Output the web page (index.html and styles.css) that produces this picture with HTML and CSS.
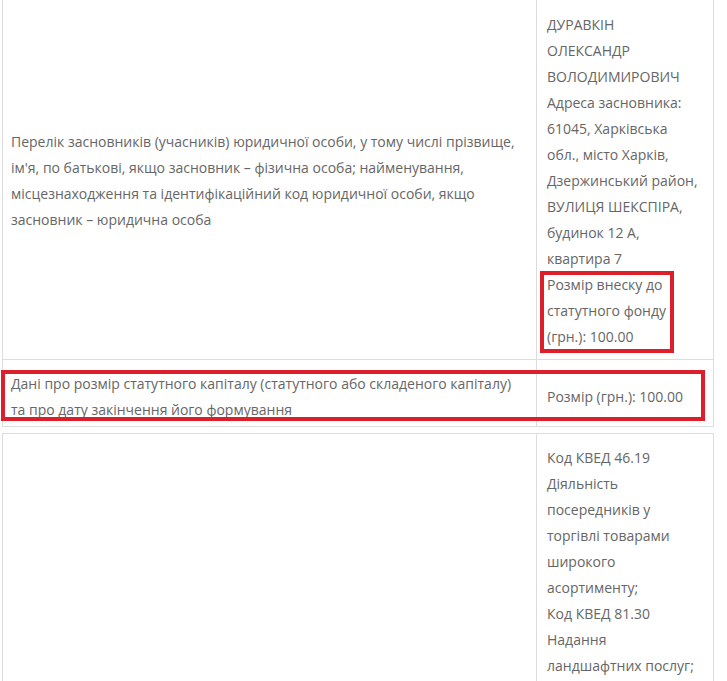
FILE: index.html
```html
<!DOCTYPE html>
<html lang="uk">
<head>
<meta charset="utf-8">
<title>Відомості про юридичну особу</title>
<link rel="stylesheet" href="styles.css">
</head>
<body>
<div class="register">
  <div class="row row-founders">
    <div class="cell cell-label">Перелік засновників (учасників) юридичної особи, у тому числі прізвище, ім'я, по батькові, якщо засновник – фізична особа; найменування, місцезнаходження та ідентифікаційний код юридичної особи, якщо засновник – юридична особа</div>
    <div class="cell cell-value">
      <div class="founder-name">ДУРАВКІН ОЛЕКСАНДР ВОЛОДИМИРОВИЧ</div>
      <div>Адреса засновника: 61045, Харківська обл., місто Харків, Дзержинський район, ВУЛИЦЯ ШЕКСПІРА, будинок 12 А, квартира 7</div>
      <div class="marked">Розмір внеску до статутного фонду (грн.): 100.00</div>
    </div>
  </div>
  <div class="row row-capital">
    <div class="cell cell-label">Дані про розмір статутного капіталу (статутного або складеного капіталу) та про дату закінчення його формування</div>
    <div class="cell cell-value">Розмір (грн.): 100.00</div>
  </div>
  <div class="row row-activity">
    <div class="cell cell-label"></div>
    <div class="cell cell-value">
      <div>Код КВЕД 46.19 Діяльність посередників у торгівлі товарами широкого асортименту;</div>
      <div>Код КВЕД 81.30 Надання ландшафтних послуг;</div>
      <div>Код КВЕД 81.21 Загальне прибирання будинків;</div>
    </div>
  </div>
</div>
</body>
</html>
```
FILE: styles.css
```css
html, body {
  margin: 0;
  padding: 0;
  background: #ffffff;
}

body {
  font-family: "Open Sans", "Noto Sans", sans-serif;
  font-size: 14px;
  line-height: 26px;
  color: #666666;
}

.register {
  padding-left: 2px;
}

.row {
  display: grid;
  grid-template-columns: 533px 177px;
  width: 712px;
  box-sizing: border-box;
  border-left: 1px solid #dddddd;
  border-right: 1px solid #dddddd;
  border-bottom: 1px solid #dddddd;
}

.cell {
  display: flex;
  flex-direction: column;
  justify-content: center;
  padding: 11px 8px 10px 8px;
}

.cell-value {
  border-left: 1px solid #dddddd;
  padding-left: 10px;
  padding-right: 13px;
}

.row-founders .cell {
  padding-top: 12px;
  padding-bottom: 9px;
}

.row-capital {
  position: relative;
}

.row-capital .cell {
  padding-top: 11px;
  padding-bottom: 3px;
}

.row-capital::after {
  content: "";
  position: absolute;
  top: 10px;
  bottom: 5px;
  left: -2px;
  right: 8px;
  border: 4px solid #dc1f2b;
  pointer-events: none;
}

.row-activity {
  margin-top: 6px;
  border-top: 1px solid #dddddd;
}

.row-activity .cell {
  justify-content: flex-start;
}

.marked {
  position: relative;
}

.marked::after {
  content: "";
  position: absolute;
  top: -1px;
  bottom: -3px;
  left: -7px;
  width: 134px;
  box-sizing: border-box;
  border: 4px solid #dc1f2b;
  pointer-events: none;
}
```
